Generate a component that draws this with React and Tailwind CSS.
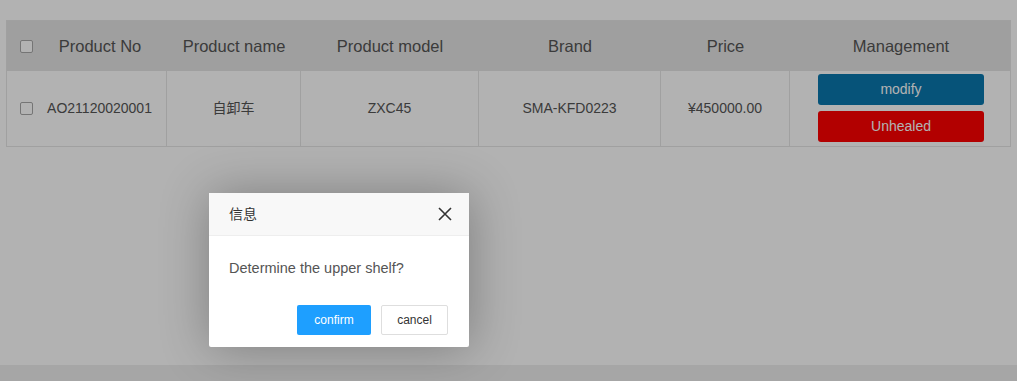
import React from "react";

const font = { fontFamily: '"Liberation Sans", "Noto Sans CJK SC", Arial, sans-serif' };

function Box() {
  return <div className="w-[13px] h-[13px] rounded-[2px] border border-[#a8a8a8] bg-white shrink-0" />;
}

export default function App() {
  const cols = "grid-cols-[160px_134px_178px_182px_129px_222px]";
  return (
    <div className="relative w-[1017px] h-[381px] bg-white overflow-hidden text-[#555]" style={font}>
      <div className="flex flex-col h-full">
        <div className="pt-5 px-[6px] flex-1">
          <div className="w-[1005px] border border-[#e6e6e6]">
            <div className={`grid ${cols} h-[50px] bg-[#e4e4e4] text-[16.5px] items-center text-center`}>
              <div className="flex items-center pl-[13px]">
                <Box />
                <div className="flex-1 pt-[1px]">Product No</div>
              </div>
              <div className="pt-[1px]">Product name</div>
              <div className="pt-[1px]">Product model</div>
              <div className="pt-[1px]">Brand</div>
              <div className="pt-[1px]">Price</div>
              <div className="pt-[1px]">Management</div>
            </div>
            <div className={`grid ${cols} h-[75px] text-[14px] items-stretch text-center`}>
              <div className="flex items-center pl-[13px] border-r border-[#e6e6e6]">
                <Box />
                <div className="flex-1">AO21120020001</div>
              </div>
              <div className="flex items-center justify-center border-r border-[#e6e6e6]">自卸车</div>
              <div className="flex items-center justify-center border-r border-[#e6e6e6]">ZXC45</div>
              <div className="flex items-center justify-center border-r border-[#e6e6e6]">SMA-KFD0223</div>
              <div className="flex items-center justify-center border-r border-[#e6e6e6]">¥450000.00</div>
              <div className="flex flex-col items-center gap-[6px] pt-[3px]">
                <div className="w-[166px] h-[31px] rounded-[3px] bg-[#0a77ae] text-white flex items-center justify-center">modify</div>
                <div className="w-[166px] h-[31px] rounded-[3px] bg-[#ff0000] text-white flex items-center justify-center">Unhealed</div>
              </div>
            </div>
          </div>
        </div>
        <div className="h-[16px] bg-[#eeeeee]" />
      </div>

      <div className="absolute inset-0 bg-black/30" />

      <div className="absolute left-[209px] top-[193px] w-[260px] bg-white rounded-[2px] shadow-[1px_1px_50px_rgba(0,0,0,0.3)]">
        <div className="h-[43px] bg-[#f8f8f8] border-b border-[#eeeeee] flex items-center justify-between pl-5 pr-[17px] text-[14px] text-[#333]">
          <span>信息</span>
          <svg width="14" height="14" viewBox="0 0 14 14" className="text-[#333]">
            <path d="M1 1 L13 13 M13 1 L1 13" stroke="currentColor" strokeWidth="1.6" fill="none" />
          </svg>
        </div>
        <div className="p-5 leading-6 text-[14.5px] text-[#555]">Determine the upper shelf?</div>
        <div className="flex justify-end gap-[10px] pr-[21px] pb-3 pt-[5px] text-[12px]">
          <div className="h-[30px] w-[74px] rounded-[2px] bg-[#1e9fff] text-white flex items-center justify-center">confirm</div>
          <div className="h-[30px] w-[67px] rounded-[2px] border border-[#dedede] bg-white text-[#333] flex items-center justify-center">cancel</div>
        </div>
      </div>
    </div>
  );
}
